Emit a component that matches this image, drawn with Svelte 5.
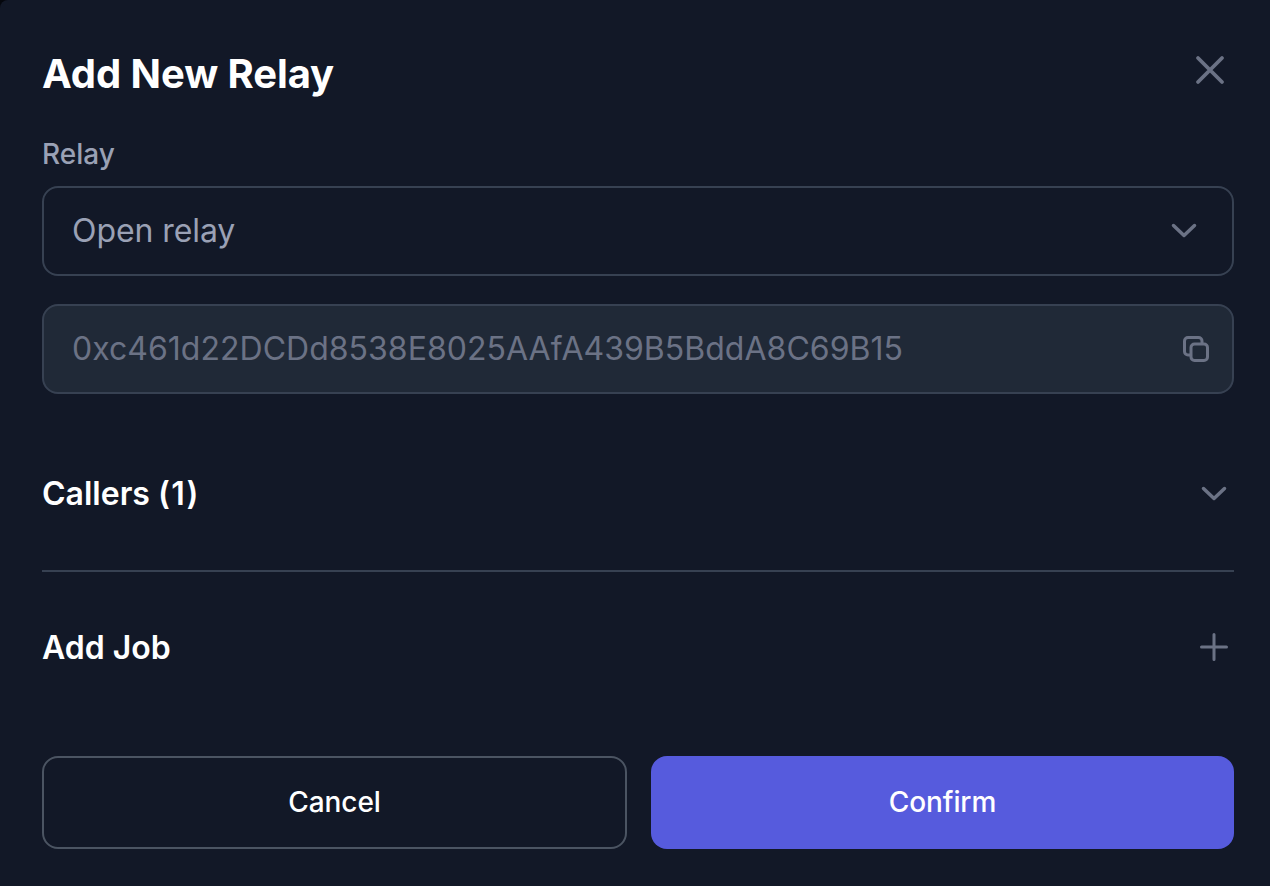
<script>
  let relay = $state('Open relay');
  const address = '0xc461d22DCDd8538E8025AAfA439B5BddA8C69B15';
</script>

<main class="modal">
  <header>
    <h1>Add New Relay</h1>
    <svg class="close" viewBox="0 0 36 36"><path d="M6 6L30 30M30 6L6 30" /></svg>
  </header>
  <div class="label">Relay</div>
  <div class="field select">
    <span>{relay}</span>
    <svg class="chevron" viewBox="0 0 28 18"><path d="M3.500 3.500L14 13.500L24.500 3.500" /></svg>
  </div>
  <div class="field address">
    <span>{address}</span>
    <svg class="copy" viewBox="0 0 28 28"><rect x="9" y="9" width="16.5" height="16.5" rx="3.5" /><path d="M8.500 20H6A3.500 3.500 0 0 1 2.500 16.500V6A3.500 3.500 0 0 1 6 2.500H16.500A3.500 3.500 0 0 1 20 6V8.500" /></svg>
  </div>
  <section class="callers">
    <h2>Callers <span>(1)</span></h2>
    <svg class="chevron" viewBox="0 0 28 18"><path d="M3.500 3.500L14 13.500L24.500 3.500" /></svg>
  </section>
  <section class="job">
    <h2>Add Job</h2>
    <svg class="plus" viewBox="0 0 30 30"><path d="M15 2.500V27.500M2.500 15H27.500" /></svg>
  </section>
  <footer>
    <button class="cancel">Cancel</button>
    <button class="confirm">Confirm</button>
  </footer>
</main>

<style>
  :global(body) { background: #05070d; }
  .modal {
    box-sizing: border-box;
    width: 1270px;
    height: 886px;
    padding: 42px 36px 0 42px;
    background: #121827;
    border-radius: 8px 0 0 0;
    font-family: Inter, sans-serif;
    color: #fff;
    overflow: hidden;
  }
  header, .field, section { display: flex; align-items: center; justify-content: space-between; }
  header { height: 64px; }
  h1, h2 { margin: 0; white-space: nowrap; }
  h1 { font-size: 40px; line-height: 64px; font-weight: 700; letter-spacing: -0.08px; }
  h2 { font-size: 32px; line-height: 48px; font-weight: 600; }
  h2 span { letter-spacing: 1.3px; }
  svg { fill: none; stroke: #6b7285; stroke-width: 3; stroke-linecap: round; stroke-linejoin: round; flex: none; display: block; }
  .close { width: 36px; height: 36px; margin: 0 6px 8px 0; stroke-width: 3.8; }
  .label { margin-top: 28px; height: 52px; line-height: 40px; font-size: 28px; font-weight: 450; color: #9aa1b5; }
  .field { box-sizing: border-box; height: 90px; border: 2px solid #374152; border-radius: 16px; padding: 0 22px 0 28px; font-size: 32px; color: #9aa1b5; }
  .field span { padding-bottom: 2px; }
  .select { padding-right: 34px; }
  .select span { letter-spacing: -0.08px; }
  .address { margin-top: 28px; background: #202937; color: #6b7285; }
  .address span { letter-spacing: 0.02px; }
  .chevron { width: 28px; height: 18px; stroke-width: 3.5; }
  .copy { width: 28px; height: 28px; }
  .plus { width: 30px; height: 30px; }
  .callers { height: 153px; padding: 23px 6px 0 0; border-bottom: 2px solid #374152; }
  .job { height: 152px; padding-right: 5px; }
  .job .plus { margin-bottom: 2px; }
  footer { display: grid; grid-template-columns: 585px 583px; gap: 24px; margin-top: 32px; }
  button { box-sizing: border-box; height: 93px; padding: 0 0 2px; border-radius: 16px; font: 500 28px Inter, sans-serif; color: #fff; letter-spacing: -0.08px; }
  .cancel { background: transparent; border: 2px solid #4b5462; }
  .confirm { background: #565bdd; border: 0; }
</style>
